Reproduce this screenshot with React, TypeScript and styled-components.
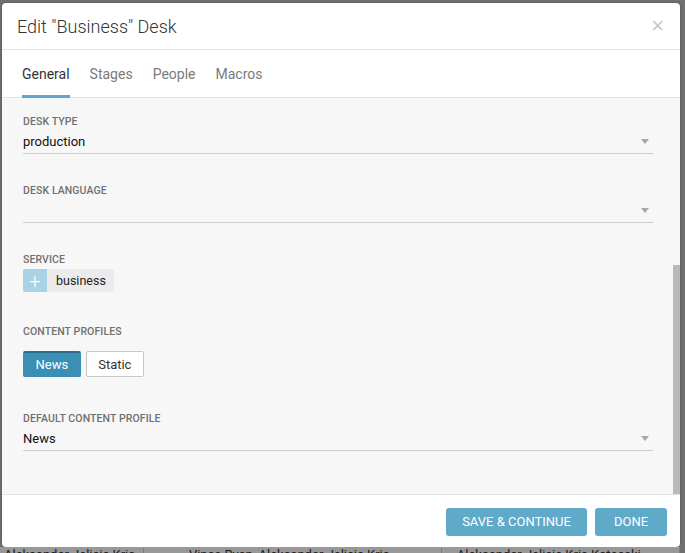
import React from "react";
import styled, { createGlobalStyle } from "styled-components";

const GlobalStyle = createGlobalStyle`
  html, body {
    margin: 0;
    padding: 0;
    background: #6f6f6f;
    font-family: Roboto, "Liberation Sans", Arial, sans-serif;
  }
  * {
    box-sizing: border-box;
  }
`;

const Page = styled.div`
  width: 685px;
  height: 553px;
  padding: 3px 5px 0 2px;
  display: flex;
  flex-direction: column;
  overflow: hidden;
`;

const Modal = styled.div`
  width: 678px;
  height: 544px;
  flex-shrink: 0;
  background: #fff;
  border-radius: 4px;
  display: flex;
  flex-direction: column;
  overflow: hidden;
  box-shadow: 0 0 2px rgba(0, 0, 0, 0.4);
`;

const Header = styled.div`
  height: 47px;
  display: flex;
  align-items: center;
  justify-content: space-between;
  padding: 0 16px 0 15px;
  border-bottom: 1px solid #e2e2e2;
  flex-shrink: 0;
`;

const Title = styled.h3`
  margin: 0;
  font-size: 18px;
  font-weight: 300;
  color: #333;
`;

const Close = styled.button`
  border: none;
  background: none;
  padding: 0;
  font-size: 22px;
  font-weight: 300;
  line-height: 1;
  color: #c8c8c8;
  cursor: pointer;
`;

const Tabs = styled.div`
  height: 48px;
  display: flex;
  gap: 20px;
  padding: 0 20px;
  border-bottom: 1px solid #e2e2e2;
  flex-shrink: 0;
`;

const Tab = styled.div<{ $active?: boolean }>`
  display: flex;
  align-items: center;
  padding-top: 3px;
  font-size: 14px;
  color: ${(p) => (p.$active ? "#333" : "#7a7a7a")};
  border-bottom: 3px solid ${(p) => (p.$active ? "#5ea9c9" : "transparent")};
  margin-bottom: -1px;
`;

const Body = styled.div`
  flex: 1;
  display: flex;
  background: #f7f7f7;
  min-height: 0;
`;

const Content = styled.div`
  flex: 1;
  padding: 17px 20px 0 21px;
  display: flex;
  flex-direction: column;
`;

const Rail = styled.div`
  width: 8px;
  display: flex;
  flex-direction: column;
  justify-content: flex-end;
`;

const Thumb = styled.div`
  height: 229px;
  background: #b9b9b9;
`;

const Field = styled.div<{ $gap?: number }>`
  margin-bottom: ${(p) => p.$gap ?? 30}px;
`;

const Label = styled.div`
  font-size: 10.5px;
  font-weight: 500;
  color: #707070;
  text-transform: uppercase;
  letter-spacing: 0.1px;
  line-height: 14px;
`;

const Select = styled.div`
  width: 630px;
  height: 25px;
  display: flex;
  align-items: center;
  justify-content: space-between;
  padding-right: 4px;
  font-size: 13px;
  color: #111;
  border-bottom: 1px solid #d0d0d0;
`;

const Caret = styled.span`
  width: 0;
  height: 0;
  border-left: 4px solid transparent;
  border-right: 4px solid transparent;
  border-top: 5px solid #a8a8a8;
`;

const TagRow = styled.div`
  display: flex;
  margin-top: 2px;
`;

const Tag = styled.div`
  display: flex;
  height: 23px;
  border-radius: 2px;
  overflow: hidden;
  background: #ebebeb;
`;

const TagAdd = styled.span`
  width: 24px;
  display: flex;
  align-items: center;
  justify-content: center;
  background: #a9d3e4;
  color: #fff;
  font-size: 20px;
  font-weight: 300;
  line-height: 1;
`;

const TagText = styled.span`
  display: flex;
  align-items: center;
  padding: 0 8px 0 9px;
  font-size: 12.5px;
  color: #222;
`;

const ToggleRow = styled.div`
  display: flex;
  gap: 5px;
  margin-top: 12px;
`;

const Toggle = styled.button<{ $on?: boolean }>`
  height: 26px;
  padding: 0 11.5px;
  border-radius: 2px;
  font-family: inherit;
  font-size: 13px;
  cursor: pointer;
  background: ${(p) => (p.$on ? "#3b8fb4" : "#fff")};
  color: ${(p) => (p.$on ? "#fff" : "#333")};
  border: 1px solid ${(p) => (p.$on ? "#3b8fb4" : "#c8c8c8")};
  border-top: ${(p) => (p.$on ? "2px solid #2c6f8c" : "1px solid #c8c8c8")};
`;

const Footer = styled.div`
  height: 53px;
  display: flex;
  justify-content: flex-end;
  align-items: center;
  gap: 8px;
  padding: 1px 13px 0 0;
  border-top: 1px solid #e2e2e2;
  flex-shrink: 0;
`;

const Action = styled.button<{ $w: number }>`
  width: ${(p) => p.$w}px;
  height: 28px;
  border: none;
  border-radius: 3px;
  background: #5fa9c9;
  color: #fff;
  font-family: inherit;
  font-size: 13px;
  text-transform: uppercase;
  cursor: pointer;
`;

const Beneath = styled.div`
  display: flex;
  height: 6px;
  margin-left: -2px;
  overflow: hidden;
  font-size: 13px;
  line-height: 14px;
  color: #1c1c1c;
  background: #989898;
`;

const BeneathCol = styled.div<{ $w: number; $pad: number }>`
  width: ${(p) => p.$w}px;
  padding-left: ${(p) => p.$pad}px;
  margin-top: 1px;
  border-right: 1px solid #7d7d7d;
  white-space: nowrap;
  overflow: hidden;
`;

const App = () => {
  return (
    <>
      <GlobalStyle />
      <Page>
        <Modal>
          <Header>
            <Title>Edit "Business" Desk</Title>
            <Close>×</Close>
          </Header>
          <Tabs>
            <Tab $active>General</Tab>
            <Tab>Stages</Tab>
            <Tab>People</Tab>
            <Tab>Macros</Tab>
          </Tabs>
          <Body>
            <Content>
              <Field $gap={30}>
                <Label>Desk Type</Label>
                <Select>
                  production
                  <Caret />
                </Select>
              </Field>
              <Field $gap={30}>
                <Label>Desk Language</Label>
                <Select>
                  <span />
                  <Caret />
                </Select>
              </Field>
              <Field $gap={33}>
                <Label>Service</Label>
                <TagRow>
                  <Tag>
                    <TagAdd>+</TagAdd>
                    <TagText>business</TagText>
                  </Tag>
                </TagRow>
              </Field>
              <Field $gap={35}>
                <Label>Content Profiles</Label>
                <ToggleRow>
                  <Toggle $on>News</Toggle>
                  <Toggle>Static</Toggle>
                </ToggleRow>
              </Field>
              <Field>
                <Label>Default Content Profile</Label>
                <Select>
                  News
                  <Caret />
                </Select>
              </Field>
            </Content>
            <Rail>
              <Thumb />
            </Rail>
          </Body>
          <Footer>
            <Action $w={141}>Save &amp; Continue</Action>
            <Action $w={72}>Done</Action>
          </Footer>
        </Modal>
        <Beneath>
          <BeneathCol $w={145} $pad={4}>Aleksandar Jelicic Kris</BeneathCol>
          <BeneathCol $w={300} $pad={45}>Vince Ryan, Aleksandar Jelicic Kris</BeneathCol>
          <BeneathCol $w={240} $pad={15}>Aleksandar Jelicic Kris Kotecski</BeneathCol>
        </Beneath>
      </Page>
    </>
  );
};

export default App;
